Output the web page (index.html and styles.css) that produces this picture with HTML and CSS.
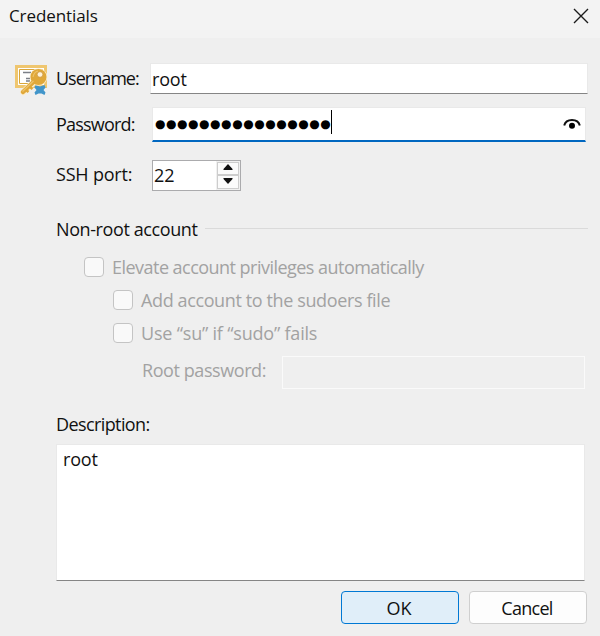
FILE: index.html
```html
<!DOCTYPE html>
<html lang="en">
<head>
<meta charset="utf-8">
<title>Credentials</title>
<link rel="stylesheet" href="styles.css">
</head>
<body>
<div class="dialog">
  <header class="titlebar">
    <span class="caption">Credentials</span>
    <svg class="close" width="16" height="16" viewBox="0 0 16 16"><path d="M1 1 15 15M15 1 1 15" fill="none" stroke="#1b1b1b" stroke-width="1.4"/></svg>
  </header>
  <main class="content">
    <div class="row row-user">
      <svg class="key-icon" width="33" height="31" viewBox="0 0 33 31">
        <path d="M1.500 1.500h29v20h-29z" fill="#fff" stroke="#efc66f" stroke-width="3"/>
        <path d="M3.500 3.500h25v16h-25z" fill="none" stroke="#fff"/>
        <path d="M4.500 4.500h23v14h-23z" fill="none" stroke="#d9a63b"/>
        <path d="M8 7.500h8M11 13.500h4M11 16h4" stroke="#7c8088" stroke-width="1.500"/>
        <path d="m20.500 20 4.500 1.500 4.500-1.500 1 2.500-2 2.500 2 2.500-1 2.500-3-1.500h-3l-3 1.500-1-2.500 2-2.500-2-2.500z" fill="#4195ca"/>
        <path d="M19 17 8.500 27" stroke="#fbeed0" stroke-width="6.500" stroke-linecap="round"/>
        <circle cx="23.500" cy="12" r="8.800" fill="#fbeed0"/>
        <path d="M20 15.500 8 27" stroke="#e0a83a" stroke-width="4.500" stroke-linecap="round"/>
        <path d="m11 25 2.500 2M15 22l2.500 2" stroke="#e0a83a" stroke-width="2.500"/>
        <circle cx="23.500" cy="12" r="8" fill="#e0a83a"/>
        <circle cx="25" cy="9.500" r="2.800" fill="#fff3d9" stroke="#c99543" stroke-width=".7"/>
        <path d="M18 12q1-5 5-6M7.500 26.500l11-10.500" fill="none" stroke="#edc36c" stroke-width="1.200"/>
      </svg>
      <span class="label t-user">Username:</span>
      <div class="field field-user"><span class="t-root">root</span></div>
    </div>
    <div class="row row-pass">
      <span class="label t-pass">Password:</span>
      <div class="field field-pass">
        <span class="dots">●●●●●●●●●●●●●●●●</span><i class="caret"></i>
        <svg class="eye" width="18" height="12" viewBox="0 0 18 12"><path d="M1.200 7.500C3 .2 15 .2 16.800 7.500" fill="none" stroke="#111" stroke-width="2"/><circle cx="9" cy="7.800" r="3" fill="#000"/></svg>
      </div>
    </div>
    <div class="row row-port">
      <span class="label t-port">SSH port:</span>
      <div class="spin">
        <span class="t-num">22</span>
        <div class="steps">
          <div class="step"><svg width="10" height="6" viewBox="0 0 10 6"><path d="M5 0 9.500 5v1h-9V5z" fill="#111"/></svg></div>
          <div class="step"><svg width="10" height="6" viewBox="0 0 10 6"><path d="M5 6 9.500 1V0h-9v1z" fill="#111"/></svg></div>
        </div>
      </div>
    </div>
    <div class="group-head"><span class="t-group">Non-root account</span><i class="rule"></i></div>
    <div class="check"><i class="box"></i><span class="t-elev">Elevate account privileges automatically</span></div>
    <div class="check sub"><i class="box"></i><span class="t-add">Add account to the sudoers file</span></div>
    <div class="check sub"><i class="box"></i><span class="t-su">Use “su” if “sudo” fails</span></div>
    <div class="rootpw"><span class="t-rootpw">Root password:</span><div class="disabled-field"></div></div>
    <div class="desc-label"><span class="t-desc">Description:</span></div>
    <div class="area"><span class="t-root">root</span></div>
    <footer class="buttons">
      <div class="btn primary"><span class="t-ok">OK</span></div>
      <div class="btn"><span class="t-cancel">Cancel</span></div>
    </footer>
  </main>
</div>
</body>
</html>
```
FILE: styles.css
```css
* { box-sizing: border-box; }
body {
  margin: 0;
  background: #efefef;
  color: #111;
  font: 400 18px/24px "Open Sans", "Noto Sans", sans-serif;
  white-space: nowrap;
}
.dialog { width: 600px; height: 636px; overflow: hidden; }
.titlebar {
  height: 38px;
  padding: 0 11px 6px 9px;
  display: flex;
  align-items: center;
  justify-content: space-between;
  background: #f3f3f3;
}
.caption { font-size: 17px; letter-spacing: -0.1px; }
svg { display: block; }
.content { padding: 25px 0 0 56px; }
.row { display: flex; }
.row-user { height: 31px; margin-left: -41px; }
.key-icon { width: 33px; margin: 2px 8px 0 0; flex: none; }
.label { width: 96px; flex: none; }
.row-user .label { width: 94px; padding-top: 3px; }
.field { background: #fff; display: flex; border: 1px solid #e9e9e9; }
.field-user { width: 438px; height: 31px; padding: 3px 1px; border-bottom: 1px solid #858585; }
.row-pass { margin-top: 13px; height: 35px; }
.row-pass .label { padding-top: 5px; }
.field-pass { width: 434px; height: 35px; padding-left: 2px; border-bottom: 2px solid #0067c0; }
.dots { width: 176px; font: 12px/33px "DejaVu Sans", sans-serif; letter-spacing: 0.55px; color: #000; }
.caret { width: 1px; height: 24px; margin-top: 2px; background: #000; }
.eye { margin: 10px 4px 0 auto; }
.row-port { margin-top: 18px; height: 31px; }
.row-port .label { padding-top: 2px; }
.spin {
  width: 89px;
  height: 31px;
  border: 1px solid #ababad;
  background: #fff;
  display: flex;
  justify-content: space-between;
  padding-left: 1px;
}
.spin > span { padding-top: 2px; }
.steps { width: 24px; padding: 1px; background: #f0f0f0; }
.step {
  height: 13px;
  border: 1px solid #cdcdcd;
  background: #fbfbfb;
  display: flex;
  align-items: center;
  justify-content: center;
}
.step svg { margin-top: -3px; }
.step + .step { height: 14px; }
.group-head { height: 24px; margin-top: 27px; display: flex; }
.group-head > span { margin-top: -1px; }
.rule { height: 1px; width: 383px; margin: 10px 12px 0 auto; background: #dadada; }
.check { height: 20px; margin: 15px 0 0 28px; display: flex; align-items: center; color: #a2a2a2; }
.check.sub { margin: 13px 0 0 57px; }
.box { width: 20px; height: 20px; margin-right: 8px; border: 1px solid #c4c4c4; border-radius: 4px; background: #f9f9f9; }
.rootpw { display: flex; height: 33px; margin: 13px 0 0 86px; color: #a2a2a2; }
.rootpw > span { width: 140px; padding-top: 2px; }
.disabled-field { width: 303px; border: 1px solid #fafafa; }
.desc-label { height: 24px; margin-top: 23px; }
.area { width: 529px; height: 137px; margin-top: 8px; padding: 2px 6px; background: #fff; border: 1px solid #e9e9e9; border-bottom-color: #858585; }
.buttons { display: flex; gap: 10px; margin: 10px 0 0 285px; }
.btn {
  width: 118px;
  height: 33px;
  border: 1px solid #cfcfcf;
  border-radius: 4px;
  background: #fdfdfd;
  display: flex;
  align-items: center;
  justify-content: center;
  padding: 1px 2px 0 0;
}
.btn.primary { background: #e0eef9; border-color: #0078d4; }
.t-user { letter-spacing: -1px; }
.t-pass { letter-spacing: -0.8px; }
.t-port { letter-spacing: -0.2px; }
.t-group { letter-spacing: -0.4px; }
.t-elev { letter-spacing: -0.53px; }
.t-add { letter-spacing: -0.38px; }
.t-su { letter-spacing: -0.2px; }
.t-rootpw { letter-spacing: -0.42px; }
.t-desc { letter-spacing: -0.6px; }
.t-root { letter-spacing: -0.2px; }
.t-cancel { letter-spacing: -0.7px; }
```
